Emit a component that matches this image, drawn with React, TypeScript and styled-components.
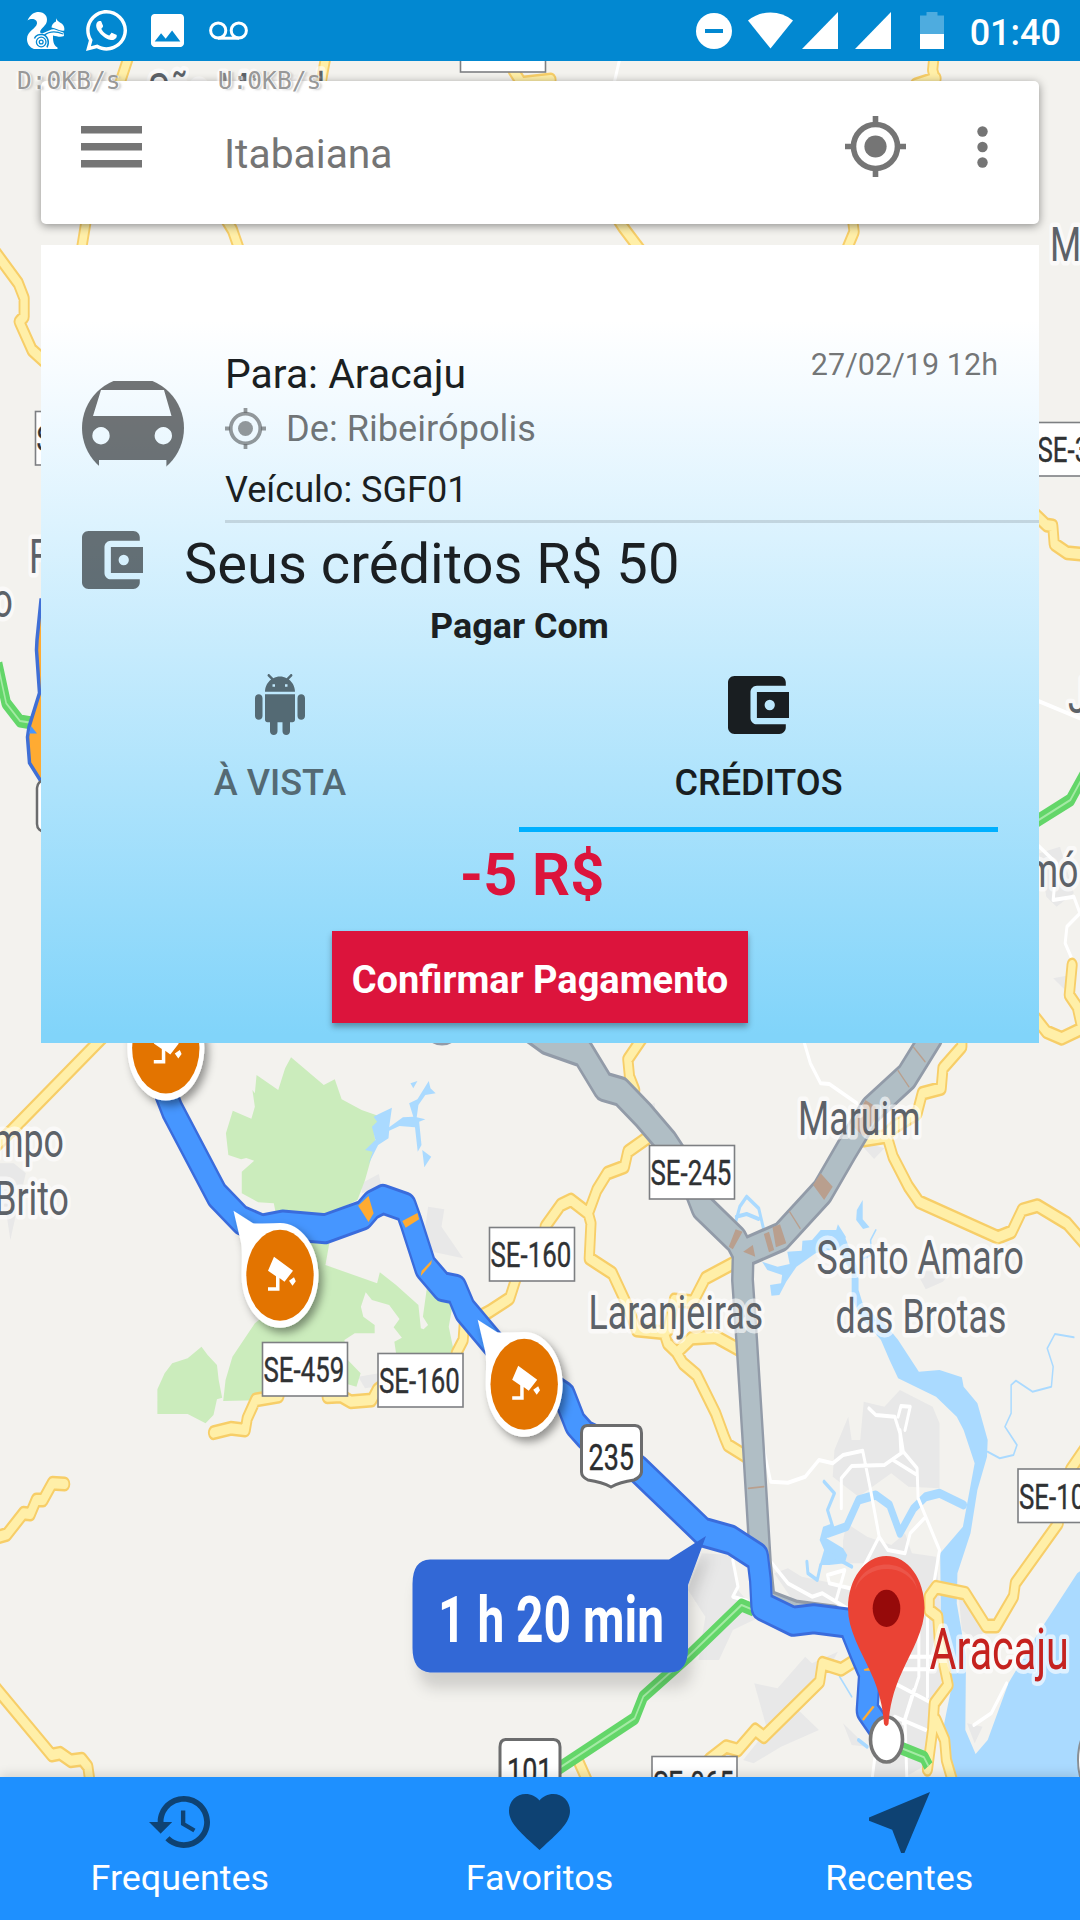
import React from "react";
import styled, { createGlobalStyle } from "styled-components";
import { FaWhatsapp } from "react-icons/fa";

const GlobalStyle = createGlobalStyle`
  * { box-sizing: border-box; }
  html, body { margin: 0; padding: 0; }
  body { width: 1080px; background: #f3f2ee; font-family: Roboto, "Noto Sans", sans-serif; }
  svg { display: block; flex: none; }
`;

/* ---------- page frame ---------- */

const Screen = styled.div`
  position: relative;
  display: flex;
  flex-direction: column;
  width: 1080px;
  height: 1920px;
  overflow: hidden;
`;

const StatusBar = styled.header`
  display: flex;
  justify-content: space-between;
  align-items: center;
  height: 61px;
  padding: 0 19px 0 27px;
  background: #0288d1;
  color: #fff;
`;

const StatusGroup = styled.div`
  display: flex;
  align-items: center;
`;

const StatusSlot = styled.span<{ $gap?: number }>`
  display: flex;
  margin-left: ${(p) => p.$gap ?? 0}px;
`;

const WhatsappIcon = styled(FaWhatsapp)`
  width: 41px;
  height: 47px;
`;

const Clock = styled.span`
  margin-left: 26px;
  padding-top: 5px;
  font-size: 36px;
  font-weight: 500;
  line-height: 42px;
`;

const NetSpeed = styled.div`
  position: absolute;
  z-index: 3;
  top: 66px;
  left: 17px;
  display: flex;
  gap: 97px;
  font-family: "DejaVu Sans Mono", monospace;
  font-size: 24.6px;
  line-height: 30px;
  font-weight: 400;
  color: rgba(125, 125, 125, 0.8);
  text-shadow: 1px 0 0 rgba(255, 255, 255, 0.9), -2px 1px 2px rgba(255, 255, 255, 0.8), 3px 1px 2px rgba(180, 180, 180, 0.6);
`;

const MapArea = styled.main`
  position: relative;
  height: 1716px;
  padding: 20px 41px 0;
  overflow: hidden;
`;

const MapCanvas = styled.svg`
  position: absolute;
  inset: 0;
`;

/* ---------- search toolbar ---------- */

const Toolbar = styled.div`
  position: relative;
  display: flex;
  align-items: center;
  height: 143px;
  padding: 0 51px 0 40px;
  border-radius: 5px;
  background: #fff;
  color: #757575;
  box-shadow: 0 2px 10px rgba(0, 0, 0, 0.42);
`;

const ToolIcon = styled.span<{ $gap?: number; $lift?: number }>`
  display: flex;
  padding-bottom: ${(p) => p.$lift ?? 12}px;
  margin-left: ${(p) => p.$gap ?? 0}px;
`;

const Place = styled.span`
  flex: 1;
  margin-left: 82px;
  padding-top: 3px;
  font-size: 40.8px;
  line-height: 48px;
`;

/* ---------- payment panel ---------- */

const Panel = styled.section`
  position: relative;
  display: flex;
  flex-direction: column;
  height: 798px;
  margin-top: 21px;
  background: linear-gradient(#fff 9.5%, #f2faff 20%, #81d4fa 99%);
  color: #1b1f22;
`;

const Trip = styled.div`
  display: flex;
  height: 278px;
  padding-left: 41px;
`;

const CarAvatar = styled.div`
  width: 102px;
  margin: 132px 41px 0 0;
`;

const TripBody = styled.div`
  flex: 1;
  display: flex;
  justify-content: space-between;
  padding: 102px 41px 0 0;
  border-bottom: 3px solid rgba(0, 0, 0, 0.12);
`;

const TripLines = styled.div`
  display: flex;
  flex-direction: column;
  padding-top: 3px;
`;

const Destination = styled.div`
  font-size: 40.9px;
  line-height: 48px;
`;

const Origin = styled.div`
  display: flex;
  align-items: center;
  gap: 20px;
  height: 50px;
  margin-top: 5px;
  padding-top: 1px;
  font-size: 36.2px;
  line-height: 54px;
  color: rgba(0, 0, 0, 0.54);
`;

const Vehicle = styled.div`
  margin-top: 16px;
  font-size: 36.1px;
  line-height: 42px;
`;

const TripDate = styled.time`
  font-size: 30.6px;
  line-height: 36px;
  color: rgba(0, 0, 0, 0.54);
`;

const Credits = styled.div`
  display: flex;
  align-items: center;
  gap: 41px;
  height: 81px;
  padding: 0 0 6px 41px;
  font-size: 56.1px;
  line-height: 66px;
`;

const WalletSlot = styled.span`
  display: flex;
  padding-bottom: 2px;
  color: rgba(0, 0, 0, 0.54);
`;

const CreditText = styled.span`
  padding-top: 6px;
`;

const PayWith = styled.div`
  height: 42px;
  padding: 1px 41px 0 0;
  font-size: 35.9px;
  line-height: 42px;
  font-weight: 700;
  text-align: center;
`;

const Tabs = styled.div`
  display: grid;
  grid-template-columns: 478px 479px;
  height: 186px;
`;

const Tab = styled.button<{ $active?: boolean }>`
  display: flex;
  flex-direction: column;
  align-items: center;
  padding: 28px 0 0;
  border: 0;
  border-bottom: 5px solid ${(p) => (p.$active ? "#00b0ff" : "transparent")};
  background: none;
  color: ${(p) => (p.$active ? "#191e21" : "#546a74")};
  font: 500 36.1px/42px Roboto, sans-serif;
`;

const TabIcon = styled.span`
  display: flex;
  align-items: center;
  height: 61px;
  margin-bottom: 27px;
`;

const Price = styled.div`
  height: 99px;
  padding: 9px 16px 0 0;
  font-size: 59.5px;
  line-height: 68px;
  font-weight: 700;
  color: #dc143c;
  text-align: center;
`;

const Confirm = styled.button`
  align-self: center;
  width: 416px;
  height: 92px;
  padding: 5px 0 0;
  border: 0;
  background: #dc143c;
  color: #fff;
  font: 700 38px/46px Roboto, sans-serif;
  white-space: nowrap;
  box-shadow: 0 4px 6px rgba(0, 0, 0, 0.32);
`;

/* ---------- bottom navigation ---------- */

const BottomNav = styled.nav`
  position: relative;
  display: flex;
  height: 143px;
  padding-right: 1px;
  background: #1e90ff;
  box-shadow: 0 -3px 10px rgba(0, 0, 0, 0.12);
`;

const NavItem = styled.div`
  flex: 1;
  display: flex;
  flex-direction: column;
  align-items: center;
  padding-top: 14px;
  color: #fff;
  font-size: 35.9px;
  line-height: 42px;
`;

const NavIcon = styled.span`
  display: flex;
  align-items: center;
  height: 62px;
  margin-bottom: 4px;
  color: #0e4273;
`;

/* ---------- icons ---------- */

const Glyph = ({ box, w, h, d }: { box: string; w: number; h: number; d: string }) => (
  <svg width={w} height={h} viewBox={box} preserveAspectRatio="none" fill="currentColor">
    <path d={d} fillRule="evenodd" />
  </svg>
);

const Locate = ({ size, opacity = 1 }: { size: number; opacity?: number }) => (
  <svg width={size} height={size} viewBox="0 0 61 61" opacity={opacity}>
    <circle cx="30.5" cy="30.5" r="22" fill="none" stroke="currentColor" strokeWidth="5.6" />
    <circle cx="30.5" cy="30.5" r="11.1" fill="currentColor" />
    <path d="M30.5 0V7M30.5 54V61M0 30.5H7M54 30.5H61" stroke="currentColor" strokeWidth="5.6" />
  </svg>
);

const Wallet = () => (
  <Glyph
    box="3 3 19 18"
    w={61}
    h={58}
    d="M21 18v1c0 1.1-.9 2-2 2H5c-1.11 0-2-.9-2-2V5c0-1.1.89-2 2-2h14c1.1 0 2 .9 2 2v1h-9c-1.11 0-2 .9-2 2v8c0 1.1.89 2 2 2h9zm-9-2h10V8H12v8zm4-2.4a1.6 1.6 0 1 1 0-3.2a1.6 1.6 0 0 1 0 3.2z"
  />
);

const Android = () => (
  <Glyph
    box="2 0 20 24"
    w={50}
    h={61}
    d="M6 18c0 .55.45 1 1 1h1v3.5c0 .83.67 1.5 1.5 1.5s1.5-.67 1.5-1.5V19h2v3.5c0 .83.67 1.5 1.5 1.5s1.5-.67 1.5-1.5V19h1c.55 0 1-.45 1-1V8H6v10zM3.5 8C2.67 8 2 8.67 2 9.5v7c0 .83.67 1.5 1.5 1.5S5 17.33 5 16.5v-7C5 8.67 4.33 8 3.5 8zm17 0c-.83 0-1.5.67-1.5 1.5v7c0 .83.67 1.5 1.5 1.5s1.5-.67 1.5-1.5v-7c0-.83-.67-1.5-1.5-1.5zm-4.97-5.84l1.3-1.3c.2-.2.2-.51 0-.71-.2-.2-.51-.2-.71 0l-1.48 1.48C13.85 1.23 12.95 1 12 1c-.96 0-1.86.23-2.66.63L7.85.15c-.2-.2-.51-.2-.71 0-.2.2-.2.51 0 .71l1.31 1.31C6.97 3.26 6 5.01 6 7h12c0-1.99-.97-3.75-2.47-4.84zM10 5H9V4h1v1zm5 0h-1V4h1v1z"
  />
);

const Car = () => (
  <svg width="102" height="102" viewBox="0 0 102 102">
    <clipPath id="avatar">
      <circle cx="51" cy="51" r="51" />
    </clipPath>
    <path
      clipPath="url(#avatar)"
      fill="rgba(0,0,0,0.54)"
      fillRule="evenodd"
      d="M0 4H102V102H84.4V83H17V102H0ZM19 13L11 39H89.5L82 13ZM19 50a8.7 8.7 0 1 0 .01 0ZM81.3 50a8.7 8.7 0 1 0 .01 0Z"
    />
  </svg>
);

const Squirrel = () => (
  <svg width="38" height="38" viewBox="0 0 38 38" fill="#fff">
    <path d="M.5 8.600C3.500 2 7.500 0 11.500 0C17.500 0 21 4.500 19.800 9.500C19 13.500 15 15.500 13.500 18.500C12.300 21 14 22 17 20.800C21 19 24 17 27 17.200L36.500 20.500L37 24C34 25.500 30 24.500 26 23.500C26 28 26 33 30.500 35.500V37H7C2.500 35.500 0 31.500 0 27C0 19 9 17 10 11.500C10.400 7.500 5 5.500 .5 8.600Z" />
    <path d="M29 6.300C30 9 32 10 35 11.700C37 13.400 37.600 15.800 37.300 18.500C33 19.600 29 16.500 24.500 15.600C24.500 13 26.500 10.600 29 9.500Z" />
    <path d="M17 23.500C23 18.500 29 19 36 22" fill="none" stroke="#0288d1" strokeWidth="1.200" />
    <path d="M7.500 26.500C8.500 23.500 12 22 15.500 22.600C20.500 23.600 23 30 20 35.300" fill="none" stroke="#0288d1" strokeWidth="1.500" />
    <circle cx="14.200" cy="30" r="4.800" fill="none" stroke="#0288d1" strokeWidth="1.300" />
    <circle cx="14.200" cy="30" r="1.900" fill="none" stroke="#0288d1" strokeWidth="1.300" />
  </svg>
);

/* ---------- map ---------- */

const SQUEEZE = 0.74;
const UNIT_X = 1568 / 540;
const UNIT_Y = 3;

type Tile = [number, number];
const NW: Tile = [0, 0];
const NE: Tile = [540, 0];
const ME: Tile = [540, 650];
const CW: Tile = [0, 1040];
const CE: Tile = [540, 1040];
const SW: Tile = [0, 1430];
const SE: Tile = [540, 1430];

type Shape = [Tile, string];

const trace = ([tile, pts]: Shape, closed = false) =>
  pts
    .trim()
    .split(/\s+/)
    .map((pair, i) => {
      const [x, y] = pair.split(",").map(Number);
      const px = (tile[0] + x / UNIT_X) / SQUEEZE;
      const py = tile[1] + y / UNIT_Y;
      return `${i ? "L" : "M"}${px.toFixed(1)} ${py.toFixed(1)}`;
    })
    .join("") + (closed ? "Z" : "");

const Areas = ({ shapes, fill }: { shapes: Shape[]; fill: string }) => (
  <path d={shapes.map((s) => trace(s, true)).join("")} fill={fill} />
);

const Lines = ({ shapes, color, width, cap = "round" }: { shapes: Shape[]; color: string; width: number; cap?: "round" | "butt" }) => (
  <path d={shapes.map((s) => trace(s)).join("")} fill="none" stroke={color} strokeWidth={width} strokeLinejoin="round" strokeLinecap={cap} />
);

const parks: Shape[] = [
  [CW, "845,52 940,135 972,118 992,178 1050,210 1110,232 1085,260 1090,310 1060,420 1038,480 950,525 800,515 795,490 750,487 702,460 702,395 738,362 715,354 700,358 663,345 656,280 676,212 730,236 740,200 733,150 740,160 745,105 808,150 828,85"],
  [CW, "958,600 945,675 1095,730 1103,697 1150,735 1215,795 1222,865 1230,868 1243,855 1228,830 1240,740 1315,790 1303,860 1318,935 1340,1000 1150,940 1145,905 1167,893 1143,862 1160,837 1130,795 1080,780 1062,757 1048,800 1055,830 1088,855 1088,880 1030,880 1000,900 1010,960 1047,1000 1035,1040 1000,1030 760,1080 648,1083 655,1020 675,950 740,850 850,760 900,600"],
  [CW, "585,920 603,945 630,975 635,1020 645,1073 630,1078 620,1125 597,1150 545,1122 457,1122 457,1048 478,1000 500,970 545,955"],
];

const water: Shape[] = [
  [CW, "1138,203 1130,262 1170,232 1200,230 1188,190 1212,178 1245,123 1250,145 1265,160 1235,165 1215,195 1210,232 1235,238 1217,245 1224,315 1213,335 1205,262 1160,258 1130,272 1128,295 1098,315 1070,372 1082,335 1060,330 1090,300 1080,260 1095,245 1085,230 1100,222"],
  [CW, "1226,330 1252,350 1232,382"],
  [CW, "1192,130 1212,123 1200,145"],
  [CE, "645,665 690,680 725,672 718,635 760,632 762,602 790,600 815,570 860,570 865,553 888,590 885,620 800,640 745,680 715,725 695,765 672,767 668,735 700,730 703,705 660,690"],
  [CE, "937,480 920,510 918,540 938,567 957,562 937,538"],
  [SE, "850,-570 885,-580 925,-480 925,-420 940,-370 1000,-320 1040,-270 1100,-175 1160,-180 1225,-158 1230,-130 1270,-80 1300,30 1298,80 1270,180 1250,310 1212,430 1210,520 1237,680 1235,900 1265,972 1300,930 1360,760 1440,620 1560,430 1600,400 1600,1050 1205,1050 1170,900 1195,770 1165,640 1162,370 1228,290 1262,100 1230,0 1210,-40 1150,-100 1040,-155 1015,-210 990,-270 930,-340 905,-400 905,-470"],
  [SE, "822,290 850,280 845,310 832,325 880,355 892,375 885,400 840,405 812,405 825,360 812,330"],
];

const streams: Shape[] = [
  [SE, "1230,225 1160,190 1120,200 1085,235 1045,310 1015,225 975,195 925,210 890,290 835,310"],
];

const creeks: Shape[] = [
  [SE, "775,395 778,430 805,450 815,405"],
  [SE, "825,155 855,190 835,240 850,290"],
  [SE, "835,370 905,410"],
  [CE, "567,550 580,500 600,470 635,505 650,570"],
  [CE, "570,530 600,522 635,537"],
  [SE, "925,930 950,950"],
];

const rivulets: Shape[] = [
  [CE, "1550,892 1495,882 1473,925 1490,980 1485,1040 1430,1055 1382,1022 1368,1035 1368,1120 1350,1160 1385,1215 1375,1245 1335,1255 1300,1235"],
  [CE, "975,570 960,600 962,645 930,660"],
  [SE, "870,740 905,800"],
];

const towns: Shape[] = [
  [CW, "1050,430 1100,402 1108,440 1050,460"],
  [CW, "1243,500 1290,508 1282,560 1345,655 1255,635 1235,560"],
  [CW, "-10,370 40,370 75,400 45,530 30,600 20,530 -10,490"],
  [CW, "1040,1010 1100,1000 1090,1040 1060,1045"],
  [CE, "940,1085 1000,1100 1045,1050 1140,1100 1160,1150 1160,1345 1070,1340 1020,1300 925,1370 850,1310 855,1230 895,1130 905,1200 930,1200"],
  [CE, "1090,690 1190,700 1170,725 1120,748"],
  [CE, "920,300 1000,325 970,357"],
  [CE, "310,200 333,188 335,215"],
  [ME, "1490,985 1540,975 1530,1025"],
  [ME, "1450,610 1510,590 1550,730 1500,770 1470,740"],
  [SE, "880,330 890,280 950,320 1020,345 1060,310 1080,370 1150,380 1165,560 1160,640 1165,760 1130,1000 1060,1041 960,1041 1000,800 1050,560 970,400 880,400"],
  [SE, "470,370 555,375 575,480 640,560 560,600 520,690 460,690 480,560 430,480"],
  [SE, "622,760 690,775 770,680 790,700 865,665 815,760 740,830 810,900 700,950 620,1000 590,990 660,900"],
  [SE, "680,430 720,415 760,440 900,470 900,530 740,520"],
  [SE, "880,880 950,950 905,945"],
  [SE, "1215,490 1270,550 1290,600 1270,640 1225,600"],
  [SE, "1240,880 1285,890 1262,940"],
];

const lanes: Shape[] = [
  [NE, "232,175 215,250"],
  [ME, "1440,150 1568,205"],
  [ME, "1440,580 1500,640 1490,750 1550,740 1568,790 1530,830 1525,880 1550,940"],
  [CE, "765,0 785,70 815,130 840,132 920,190"],
  [SE, "650,60 670,155 720,158 770,140 810,90 850,100 880,75 937,62 960,180 985,320 935,420"],
  [SE, "875,235 875,145 905,108 1000,105 1055,65 1045,0"],
  [CE, "955,1105 975,1125 1030,1130 1045,1180 1048,1240"],
  [CE, "1060,1170 1075,1100 1048,1098 1040,1130"],
  [SE, "1055,65 1095,115 1098,205 1160,360 1142,470"],
  [SE, "1025,90 1095,135"],
  [SE, "985,320 1010,360 1060,370 1075,310 1120,260"],
  [SE, "670,395 720,460 790,500 820,490 900,540"],
  [SE, "860,510 885,420 835,435 840,460 900,475"],
  [SE, "560,390 575,470 560,500 600,512"],
  [SE, "1100,590 1100,740 1060,870 1065,1041"],
  [SE, "1125,560 1125,800"],
  [SE, "1060,680 1150,680"],
  [SE, "1040,718 1145,718"],
  [SE, "1030,760 1130,815"],
  [SE, "1030,860 1120,900"],
  [SE, "1085,780 1055,880"],
  [SE, "975,960 965,1041"],
  [SE, "1355,760 1310,850 1260,885"],
];

const roads: Shape[] = [
  [NW, "380,150 350,243 260,600 237,745"],
  [NW, "948,160 932,250"],
  [NW, "645,640 675,690 697,755"],
  [NW, "1490,210 1515,250 1600,240"],
  [NW, "-12,758 53,850 70,895 70,950 56,965 93,1050 125,1080"],
  [NE, "1145,160 1140,210 1150,250"],
  [NE, "1090,255 1150,235"],
  [NE, "215,640 240,680 295,755"],
  [NE, "905,640 912,695 890,750"],
  [NE, "1440,1545 1470,1575 1489,1578 1493,1632 1530,1658 1600,1665"],
  [ME, "1545,945 1537,1035 1560,1070 1575,1140"],
  [ME, "1440,1105 1470,1145 1515,1165 1575,1135"],
  [CW, "-20,325 30,275 310,-20"],
  [CW, "620,1178 670,1165 712,1170 718,1135 742,1080 810,1068"],
  [CW, "950,1070 990,1068 1018,1085 1080,1080 1095,1050 1120,1030"],
  [CW, "1325,940 1345,900 1348,855 1420,815 1480,775 1500,710"],
  [CE, "300,-10 255,58 260,110 275,150"],
  [CE, "310,295 255,335 245,380 195,400 165,450 140,520 90,480 60,495 15,560"],
  [CE, "140,520 148,550 143,655 210,700 255,800 280,870 360,878 370,910 395,935 415,970 455,1005 510,1120 535,1190 545,1215 600,1250"],
  [CE, "400,935 440,895 510,890 580,930"],
  [CE, "372,870 390,780 445,785 480,715 570,665"],
  [CE, "1225,5 1225,20 1170,85 1165,145 1110,160 1095,220 1030,260 1000,290 940,300"],
  [CE, "1008,290 1025,350 1070,440 1100,485 1330,592 1370,575 1400,510 1445,497 1530,550 1585,615"],
  [SW, "-20,325 20,313 68,250 88,252 105,210 125,210 152,160 188,162"],
  [SW, "-15,770 150,975 175,970 205,992 238,988 255,1010 262,1060"],
  [SE, "1540,120 1580,60"],
  [SE, "1505,280 1380,460 1375,500 1325,588 1295,588 1235,490 1150,472 1130,500 1130,540 1155,560 1160,640 1185,765 1145,820 1140,900 1125,1018"],
  [SE, "1150,870 1175,930 1180,990 1197,1050"],
  [SE, "925,685 875,718 820,700 812,755 650,920 625,900 575,960 540,950 490,990"],
  [SE, "110,990 138,1055"],
];

const green: Shape[] = [
  [SE, "620,540 585,525 430,680 300,800 275,865 55,1015 -70,1090"],
  [SE, "1050,955 1115,982 1128,1008"],
  [ME, "1440,515 1540,450 1580,375"],
  [ME, "-1575,40 -1550,160 -1510,213 -1480,218"],
];

const alternates: Shape[] = [
  [CE, "-80,-90 -40,-45 20,0 125,38 185,140 235,155 300,225 370,310 440,420 470,500 570,600 590,640 588,720 600,900 620,1230 640,1570 652,1690 740,1725 850,1740"],
  [CE, "1140,-15 1065,110 960,210 890,330 820,455 700,590 600,635"],
];

const jams: Shape[] = [
  [CE, "945,180 975,200 975,235 940,290 905,255"],
  [CE, "815,400 850,440 825,480 793,435"],
  [CE, "675,562 697,553 715,610 685,622"],
  [CE, "650,582 665,575 680,630 665,637"],
  [CE, "568,568 588,575 560,628 548,620"],
  [CE, "590,635 618,615 625,650"],
];

const jamLines: Shape[] = [
  [CE, "1085,22 1118,65"],
  [CE, "1040,92 1071,140"],
  [CE, "725,515 755,565"],
  [SE, "605,175 650,170"],
];

const route: Shape[] = [
  [CW, "470,130 500,210 630,465 700,540 760,567 820,555 945,566 1055,525 1080,495 1112,478 1178,502 1193,545 1235,680 1285,740 1325,748 1350,810 1460,945 1640,1070 1670,1150 1700,1185 1760,1215 1855,1290 2043,1477 2123,1500 2200,1552 2208,1620 2212,1698 2303,1744 2363,1736 2465,1750 2500,1840 2525,1900 2518,2010 2565,2080"],
];

const slow: Shape[] = [
  [CW, "1040,497 1070,468 1085,520 1070,546"],
  [CW, "1168,543 1212,519 1217,538 1178,563"],
  [CW, "1222,708 1224,693 1254,660 1252,672"],
  [SE, "940,718 965,710 965,722 942,722"],
  [SE, "935,868 965,828 972,830 940,872"],
];

const Label = ({ x, y, children, size = 48, color = "#5d6268", k = 0.745, end = false }: { x: number; y: number; children: string; size?: number; color?: string; k?: number; end?: boolean }) => (
  <text
    transform={`translate(${x} ${y}) scale(${k} 1)`}
    fontSize={size}
    fill={color}
    stroke="rgba(255,255,255,0.62)"
    strokeWidth="9"
    strokeLinejoin="round"
    paintOrder="stroke"
    textAnchor={end ? "end" : "start"}
  >
    {children}
  </text>
);

const RoadSign = ({ x, y, children }: { x: number; y: number; children: string }) => (
  <g transform={`translate(${x} ${y})`}>
    <rect x="0.500" y="0.500" width="85" height="53.500" fill="#fff" stroke="#7d7f82" strokeWidth="1.600" />
    <text transform="translate(1.500 40) scale(.745 1)" fontSize="34.700" fill="#303234" stroke="#303234" strokeWidth="0.400">
      {children}
    </text>
  </g>
);

const Shield = ({ x, y, children }: { x: number; y: number; children: string }) => (
  <g transform={`translate(${x} ${y})`}>
    <path d="M7 1.500H55Q61.500 2 61.500 9V48Q61 53 54 56Q40 58 31 63Q22 58 8 56Q1.500 53 1.500 48V9Q1.500 2 7 1.500Z" fill="#fff" stroke="#6b6c6d" strokeWidth="3" />
    <text transform="translate(8.500 45.500) scale(.75 1)" fontSize="36" fill="#2b2d2f" stroke="#2b2d2f" strokeWidth="0.400">
      {children}
    </text>
  </g>
);

const CameraPin = ({ x, y }: { x: number; y: number }) => (
  <g transform={`translate(${x} ${y})`}>
    <path
      d="M-46.500 -64.500L-27 -52Q-24 -51.500 0 -52.300C21 -52.300 38.500 -29 38.500 0C38.500 29 21 52.500 0 52.500C-21 52.500 -38.500 29 -38.500 0C-38.500 -12 -37 -28 -40 -37Z"
      fill="#fff"
      filter="url(#pinShadow)"
    />
    <ellipse rx="33.700" ry="45.500" fill="#e37400" />
    <path d="M-6 -18.500L13 -4.500L4.500 6.500L-.5 2.700V15.500H-12V12H-4V1L-12 -4.500ZM14 2L15.800 6L12.500 10.500L9 5.500Z" fill="#fff" />
  </g>
);

const RouteMap = () => (
  <MapCanvas width="1080" height="1716" viewBox="0 61 1080 1716">
    <defs>
      <filter id="pinShadow" x="-30%" y="-30%" width="170%" height="170%">
        <feDropShadow dx="4" dy="5" stdDeviation="4" floodOpacity="0.4" />
      </filter>
      <filter id="bubbleShadow" x="-20%" y="-20%" width="140%" height="160%">
        <feDropShadow dx="5" dy="16" stdDeviation="7" floodOpacity="0.14" />
      </filter>
    </defs>
    <rect y="61" width="1080" height="1716" fill="#f3f2ee" />
    <g transform={`scale(${SQUEEZE} 1)`}>
      <Areas shapes={towns} fill="#e8e8e8" />
      <Areas shapes={parks} fill="#cbecbc" />
      <Areas shapes={water} fill="#aadaff" />
      <Lines shapes={streams} color="#aadaff" width={9} />
      <Lines shapes={creeks} color="#aadaff" width={4} />
      <Lines shapes={rivulets} color="#aadaff" width={2} />
      <Lines shapes={lanes} color="#fff" width={4} />
      <Lines shapes={roads} color="#f7ce68" width={15} />
      <Lines shapes={roads} color="#ffefa8" width={10} />
      <Lines shapes={green} color="#63d669" width={13} cap="butt" />
      <Lines shapes={green} color="#a5eaa5" width={2.2} cap="butt" />
      <Lines shapes={alternates} color="#929ba8" width={31} />
      <Lines shapes={alternates} color="#b0bec5" width={24.5} />
      <Areas shapes={jams} fill="#b99f8e" />
      <Lines shapes={jamLines} color="#b99f8e" width={1.7} />
      <Lines shapes={route} color="#3a6cdc" width={31} />
      <Lines shapes={route} color="#4696ff" width={25} />
      <Areas shapes={slow} fill="#ffab32" />
    </g>
    <path d="M41 600L37 640L36.500 650L39.500 693L29 727L27.500 737L29.500 763L42 783H60V600Z" fill="#ffab32" stroke="#3f6fd6" strokeWidth="3.500" />
    <path d="M31 726L37 733.500H29Z" fill="#4696ff" />
    <rect x="37" y="780" width="40" height="52" rx="8" fill="#fff" stroke="#6b6c6d" strokeWidth="2.500" />
    <path d="M430 1042Q442 1049 454 1042Z" fill="#929ba8" />

    <RoadSign x={460} y={18}>SE-170</RoadSign>
    <RoadSign x={35} y={411}>SE-106</RoadSign>
    <RoadSign x={1036} y={422}>SE-339</RoadSign>
    <RoadSign x={649} y={1145}>SE-245</RoadSign>
    <RoadSign x={489} y={1227}>SE-160</RoadSign>
    <RoadSign x={262} y={1342}>SE-459</RoadSign>
    <RoadSign x={377.500} y={1353}>SE-160</RoadSign>
    <RoadSign x={1017.500} y={1468.500}>SE-100</RoadSign>
    <RoadSign x={651.500} y={1756}>SE-065</RoadSign>

    <Label x={148} y={107}>São Miguel</Label>
    <Label x={1050} y={261}>Malhador</Label>
    <Label x={29} y={573}>Frei Paulo</Label>
    <Label x={13} y={617} end>Alto</Label>
    <Label x={1068} y={713}>Japaratuba</Label>
    <Label x={1078.500} y={887} end>Siriri mó</Label>
    <Label x={64} y={1157} end>Campo</Label>
    <Label x={69} y={1215} end>Brito</Label>
    <Label x={798} y={1134.500}>Maruim</Label>
    <Label x={816.500} y={1274}>Santo Amaro</Label>
    <Label x={835.500} y={1333}>das Brotas</Label>
    <Label x={588.500} y={1329}>Laranjeiras</Label>
    <Label x={929.500} y={1669} size={57} color="#c5221f" k={0.725}>Aracaju</Label>

    <CameraPin x={165.800} y={1048} />
    <CameraPin x={280} y={1275.300} />
    <CameraPin x={524.200} y={1384.200} />
    <Shield x={580} y={1424}>235</Shield>
    <Shield x={498.500} y={1738}>101</Shield>

    <path
      d="M430 1559.500H669L706 1536L688 1585V1648Q688 1672.500 670 1672.500H430Q412.500 1671 412.500 1648V1584Q412.500 1560 430 1559.500Z"
      fill="#3267d6"
      filter="url(#bubbleShadow)"
    />
    <text x="438" y="1641.700" fontSize="64" fontWeight="700" fill="#fff" textLength="226" lengthAdjust="spacingAndGlyphs">
      1 h 20 min
    </text>

    <ellipse cx="886.500" cy="1739.500" rx="16" ry="22.500" fill="#fff" stroke="#757575" strokeWidth="3.600" />
    <path d="M886.300 1556C908 1556 924.500 1579 924.500 1608C924.500 1630 912 1650 902 1672C893 1691 889.500 1708 888.500 1724Q886.300 1728 884 1724C883 1708 879.500 1691 870.500 1672C860.500 1650 848 1630 848 1608C848 1579 865 1556 886.300 1556Z" fill="#ea4335" />
    <path d="M855 1590C862 1556 911 1556 917.500 1590C908 1562 866 1562 855 1590Z" fill="#ec5549" />
    <ellipse cx="886.500" cy="1608.300" rx="13.800" ry="18.600" fill="#960a0a" />
    <ellipse cx="1099" cy="1760" rx="21" ry="38" fill="#fff" stroke="#8a8f94" strokeWidth="2" />
  </MapCanvas>
);

/* ---------- screen ---------- */

const HISTORY =
  "M13 3c-4.970 0-9 4.030-9 9H1l3.890 3.890.07.14L9 12H6c0-3.870 3.130-7 7-7s7 3.130 7 7-3.130 7-7 7c-1.930 0-3.680-.79-4.940-2.060l-1.420 1.420C8.270 19.990 10.510 21 13 21c4.970 0 9-4.030 9-9s-4.030-9-9-9zm-1 5v5l4.280 2.540.72-1.210-3.500-2.080V8H12z";
const HEART =
  "M12 21.350l-1.450-1.320C5.400 15.360 2 12.280 2 8.500 2 5.420 4.420 3 7.500 3c1.740 0 3.410.81 4.500 2.090C13.090 3.810 14.760 3 16.500 3 19.580 3 22 5.420 22 8.500c0 3.780-3.400 6.860-8.550 11.540L12 21.350z";
const NEAR = "M21 3L3 10.530v.98l6.840 2.650L12.480 21h.98L21 3z";

export default function App() {
  return (
    <Screen>
      <GlobalStyle />
      <StatusBar>
        <StatusGroup>
          <StatusSlot>
            <Squirrel />
          </StatusSlot>
          <StatusSlot $gap={21}>
            <WhatsappIcon />
          </StatusSlot>
          <StatusSlot $gap={24}>
            <Glyph box="3 3 18 18" w={33} h={33} d="M21 19V5c0-1.100-.9-2-2-2H5c-1.100 0-2 .9-2 2v14c0 1.100.9 2 2 2h14c1.100 0 2-.9 2-2zM8.500 13.500l2.500 3.010L14.500 12l4.500 6H5l3.500-4.500z" />
          </StatusSlot>
          <StatusSlot $gap={25}>
            <svg width="39" height="19" viewBox="0 0 39 19" fill="none" stroke="#fff" strokeWidth="3">
              <circle cx="9.200" cy="9.500" r="7.600" />
              <circle cx="29.800" cy="9.500" r="7.600" />
              <path d="M9 17.200H30" />
            </svg>
          </StatusSlot>
        </StatusGroup>
        <StatusGroup>
          <StatusSlot>
            <svg width="36" height="36" viewBox="0 0 36 36">
              <circle cx="18" cy="18" r="18" fill="#fff" />
              <path d="M9 18H27" stroke="#0288d1" strokeWidth="4" />
            </svg>
          </StatusSlot>
          <StatusSlot $gap={16}>
            <svg width="45" height="37" viewBox="0 0 45 37" fill="#fff">
              <path d="M0 8.500Q10 .5 22.500 .5T45 8.500L22.500 36.500Z" />
            </svg>
          </StatusSlot>
          <StatusSlot $gap={9}>
            <svg width="36" height="37" viewBox="0 0 36 37" fill="#fff">
              <path d="M36 0V37H0Z" />
            </svg>
          </StatusSlot>
          <StatusSlot $gap={17}>
            <svg width="36" height="37" viewBox="0 0 36 37" fill="#fff">
              <path d="M36 0V37H0Z" />
            </svg>
          </StatusSlot>
          <StatusSlot $gap={29}>
            <svg width="24" height="37" viewBox="0 0 24 37" fill="#fff">
              <path d="M6.500 0H17.500V3.500H24V22H0V3.500H6.500Z" opacity=".3" />
              <path d="M0 22H24V37H0Z" />
            </svg>
          </StatusSlot>
          <Clock>01:40</Clock>
        </StatusGroup>
      </StatusBar>

      <NetSpeed>
        <span>D:0KB/s</span>
        <span>U:0KB/s</span>
      </NetSpeed>

      <MapArea>
        <RouteMap />
        <Toolbar>
          <ToolIcon $lift={11}>
            <Glyph box="0 0 61 42" w={61} h={42} d="M0 0H61V7.500H0ZM0 17H61V24.500H0ZM0 34H61V41.500H0Z" />
          </ToolIcon>
          <Place>Itabaiana</Place>
          <ToolIcon>
            <Locate size={61} />
          </ToolIcon>
          <ToolIcon $gap={71} $lift={11}>
            <svg width="11" height="42" viewBox="0 0 11 42" fill="currentColor">
              <circle cx="5.500" cy="5.500" r="5.200" />
              <circle cx="5.500" cy="21" r="5.200" />
              <circle cx="5.500" cy="36.500" r="5.200" />
            </svg>
          </ToolIcon>
        </Toolbar>

        <Panel>
          <Trip>
            <CarAvatar>
              <Car />
            </CarAvatar>
            <TripBody>
              <TripLines>
                <Destination>Para: Aracaju</Destination>
                <Origin>
                  <Locate size={41} opacity={0.72} />
                  De: Ribeirópolis
                </Origin>
                <Vehicle>Veículo: SGF01</Vehicle>
              </TripLines>
              <TripDate>27/02/19 12h</TripDate>
            </TripBody>
          </Trip>
          <Credits>
            <WalletSlot>
              <Wallet />
            </WalletSlot>
            <CreditText>Seus créditos R$ 50</CreditText>
          </Credits>
          <PayWith>Pagar Com</PayWith>
          <Tabs>
            <Tab>
              <TabIcon>
                <Android />
              </TabIcon>
              À VISTA
            </Tab>
            <Tab $active>
              <TabIcon>
                <Wallet />
              </TabIcon>
              CRÉDITOS
            </Tab>
          </Tabs>
          <Price>-5 R$</Price>
          <Confirm>Confirmar Pagamento</Confirm>
        </Panel>
      </MapArea>

      <BottomNav>
        <NavItem>
          <NavIcon>
            <Glyph box="1 3 21 18" w={61} h={52} d={HISTORY} />
          </NavIcon>
          <span>Frequentes</span>
        </NavItem>
        <NavItem>
          <NavIcon>
            <Glyph box="2 3 20 18.350" w={61} h={56} d={HEART} />
          </NavIcon>
          <span>Favoritos</span>
        </NavItem>
        <NavItem>
          <NavIcon>
            <Glyph box="3 3 18 18" w={61} h={61} d={NEAR} />
          </NavIcon>
          <span>Recentes</span>
        </NavItem>
      </BottomNav>
    </Screen>
  );
}
